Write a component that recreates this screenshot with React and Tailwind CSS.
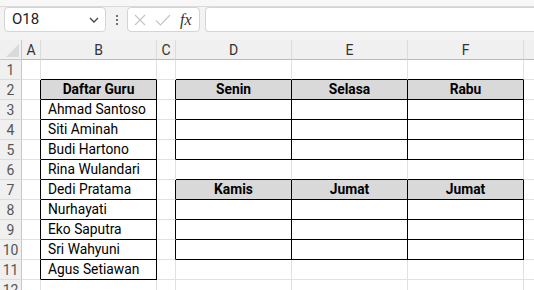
import React from "react";

const cols = ["A", "B", "C", "D", "E", "F", "G"];
const guru = [
  "Ahmad Santoso",
  "Siti Aminah",
  "Budi Hartono",
  "Rina Wulandari",
  "Dedi Pratama",
  "Nurhayati",
  "Eko Saputra",
  "Sri Wahyuni",
  "Agus Setiawan",
];

// returns cell content/style for a (row, col) pair; rows 1..12, cols 0..6
const cellInfo = (r, c) => {
  const info = { text: "", bold: false, fill: false, right: false, bottom: false, center: false };
  // Daftar Guru table: B2:B11
  if (c === 1 && r >= 2 && r <= 11) {
    info.right = true;
    info.bottom = true;
    if (r === 2) {
      info.text = "Daftar Guru";
      info.bold = true;
      info.fill = true;
      info.center = true;
    } else info.text = guru[r - 3];
  }
  if (c === 0 && r >= 2 && r <= 11) info.right = true;
  if (c === 1 && r === 1) info.bottom = true;

  // schedule tables D2:F5 and D7:F10
  const inTop = r >= 2 && r <= 5;
  const inBot = r >= 7 && r <= 10;
  if (c >= 3 && c <= 5 && (inTop || inBot)) {
    info.right = true;
    info.bottom = true;
    if (r === 2 || r === 7) {
      info.bold = true;
      info.fill = true;
      info.center = true;
      info.text =
        r === 2 ? ["Senin", "Selasa", "Rabu"][c - 3] : ["Kamis", "Jumat", "Jumat"][c - 3];
    }
  }
  if (c === 2 && (inTop || inBot)) info.right = true;
  if (c >= 3 && c <= 5 && (r === 1 || r === 6)) info.bottom = true;
  return info;
};

const FormulaBar = () => (
  <div>
    <div className="h-[7px] bg-[#f7f7f7] border-b border-[#dadada]" />
    <div className="h-[33px] bg-[#f3f3f3] flex items-start">
      <div className="ml-[4px] w-[102px] h-[25px] bg-white border border-[#d4d4d4] rounded-[4px] flex items-center justify-between pl-[7px] pr-[6px]">
        <span className="text-[15px] leading-none text-[#222]">O18</span>
        <svg width="10" height="6" viewBox="0 0 10 6">
          <path d="M1 1l4 4 4-4" fill="none" stroke="#444" strokeWidth="1.3" />
        </svg>
      </div>
      <div className="w-[21px] h-[25px] flex flex-col items-center justify-center gap-[2px]">
        <span className="w-[2px] h-[2px] bg-[#444] rounded-full" />
        <span className="w-[2px] h-[2px] bg-[#444] rounded-full" />
        <span className="w-[2px] h-[2px] bg-[#444] rounded-full" />
      </div>
      <div className="w-[73px] h-[25px] bg-white border border-[#d4d4d4] rounded-[4px] flex items-center pl-[6px] gap-[9px]">
        <svg width="12" height="12" viewBox="0 0 12 12">
          <path d="M1 1l10 10M11 1L1 11" stroke="#c4c4c4" strokeWidth="1.1" />
        </svg>
        <svg width="16" height="12" viewBox="0 0 16 12">
          <path d="M1 6.5l4.5 4.5L15 1" fill="none" stroke="#c4c4c4" strokeWidth="1.1" />
        </svg>
        <span
          className="text-[16px] italic text-[#333] leading-none"
          style={{ fontFamily: '"Liberation Serif", serif' }}
        >
          fx
        </span>
      </div>
      <div className="ml-[5px] flex-1 h-[25px] bg-white border border-[#d4d4d4] rounded-l-[4px] border-r-0" />
    </div>
  </div>
);

export default function App() {
  const template = "22px 19px 116px 19px 116px 116px 116px 116px";
  const rows = Array.from({ length: 12 }, (_, i) => i + 1);
  return (
    <div
      className="w-[534px] h-[290px] overflow-hidden bg-[#f3f3f3]"
      style={{ fontFamily: 'Roboto, "Noto Sans", sans-serif' }}
    >
      <FormulaBar />
      <div className="grid w-max" style={{ gridTemplateColumns: template }}>
        {/* header row */}
        <div className="h-[20px] bg-[#f0f0f0] border-r border-b border-[#c8c8c8] relative">
          <svg className="absolute right-[2px] bottom-[2px]" width="13" height="13" viewBox="0 0 13 13">
            <path d="M13 0V13H0z" fill="#dadada" />
          </svg>
        </div>
        {cols.map((c) => (
          <div
            key={c}
            className="h-[20px] bg-[#f0f0f0] border-r border-b border-r-[#dcdcdc] border-b-[#b9b9b9] flex items-center justify-center text-[14px] leading-none text-[#333]"
          >
            {/* G sits mostly off-screen, its letter is not visible */}
            {c === "G" ? "" : c}
          </div>
        ))}
        {rows.map((r) => (
          <React.Fragment key={r}>
            <div className="h-[20px] bg-[#f0f0f0] border-r border-b border-r-[#c8c8c8] border-b-[#dcdcdc] flex items-center justify-center text-[14px] leading-none text-[#555]">
              {r}
            </div>
            {cols.map((c, ci) => {
              const info = cellInfo(r, ci);
              return (
                <div
                  key={c}
                  className={`h-[20px] border-r border-b flex items-center text-[13.8px] leading-none text-black whitespace-nowrap overflow-hidden ${
                    info.fill ? "bg-[#d9d9d9]" : "bg-white"
                  } ${info.right ? "border-r-black" : "border-r-[#e1e1e1]"} ${
                    info.bottom ? "border-b-black" : "border-b-[#e1e1e1]"
                  } ${info.center ? "justify-center" : "pl-[7px]"} ${info.bold ? "font-bold" : ""}`}
                >
                  {info.text}
                </div>
              );
            })}
          </React.Fragment>
        ))}
      </div>
    </div>
  );
}
